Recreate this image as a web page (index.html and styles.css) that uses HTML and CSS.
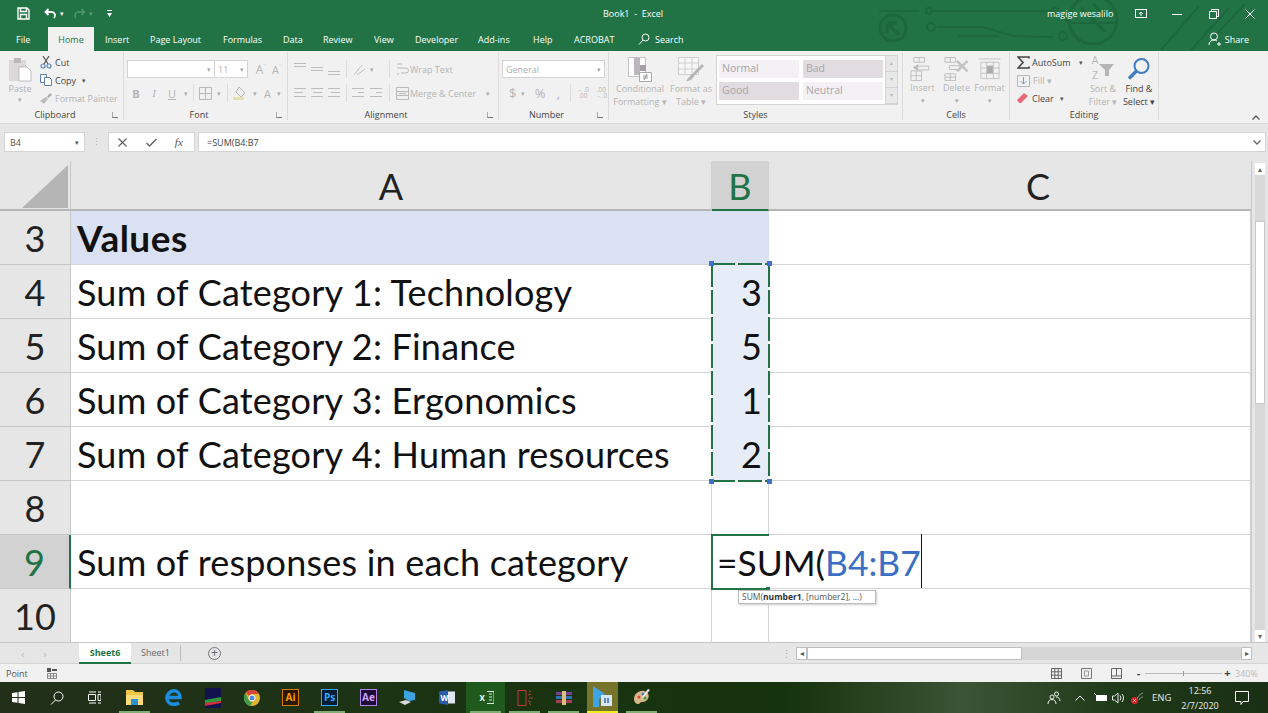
FILE: index.html
```html
<!DOCTYPE html>
<html lang="en">
<head>
	<meta charset="UTF-8">
	<title>Book1 - Excel</title>
	<link rel="stylesheet" href="styles.css">
</head>
<body>
<div id="app">
	<!-- title bar -->
	<div class="titlebar">
		<svg class="circuit" width="400" height="51" viewBox="0 0 400 51" fill="none" stroke="#1d673d" stroke-width="2">
			<circle cx="22" cy="28" r="13" stroke-width="3"/><path d="M16 34V23h10M16 23l12 12" stroke-width="3"/>
			<path d="M8 11h40M60 11h122l18 12h46M66 27h46l30 9 40 1M128 36h-40"/><circle cx="58" cy="11" r="3"/><circle cx="60" cy="27" r="4"/><circle cx="184" cy="11" r="3"/><circle cx="192" cy="36" r="4"/>
			<circle cx="222" cy="20" r="24" stroke-width="3"/><path d="M210 8l24 24M222 4l14 14" stroke-width="3"/>
			<path d="M290 50l38-44M320 50l38-42M342 38l32-34"/>
		</svg>
		<div class="qat">
			<svg width="13" height="13" viewBox="0 0 13 13" fill="none" stroke="#fff" stroke-width="1.4"><path d="M1 1h9l2 2v9H1zM3.500 1v3.500h6V1M3.500 12V7.500h6V12"/></svg>
			<svg class="qat-undo" width="13" height="11" viewBox="0 0 13 11" fill="none" stroke="#fff" stroke-width="1.8"><path d="M4.500 1L1.500 4l3 3M2 4h6a3.500 3.500 0 0 1 2 6"/></svg>
			<span class="qat-caret">▾</span>
			<svg class="qat-redo" width="13" height="11" viewBox="0 0 13 11" fill="none" stroke="#4f9570" stroke-width="1.6"><path d="M8.500 1l3 3-3 3M11 4H5a3.500 3.500 0 0 0-2 6"/></svg>
			<span class="qat-caret dim">▾</span>
			<svg class="qat-more" width="7" height="8" viewBox="0 0 7 8" fill="#fff"><rect x="1" y="0" width="5" height="1"/><path d="M1 3h5L3.500 7z"/></svg>
		</div>
		<div class="doc-title">Book1 &nbsp;-&nbsp; Excel</div>
		<div class="win-controls">
			<span class="user">magige wesalilo</span>
			<svg class="wc wc-display" width="12" height="10" viewBox="0 0 12 10" fill="none" stroke="#fff"><rect x=".5" y=".5" width="11" height="8"/><path d="M6 7V3M4 5l2-2 2 2" /></svg>
			<svg class="wc wc-min" width="10" height="10" viewBox="0 0 10 10" stroke="#fff"><path d="M0 5.500h10"/></svg>
			<svg class="wc wc-max" width="10" height="10" viewBox="0 0 10 10" fill="none" stroke="#fff"><path d="M.5 2.500h7v7h-7zM2.500 2.500v-2h7v7h-2"/></svg>
			<svg class="wc wc-close" width="10" height="10" viewBox="0 0 10 10" stroke="#fff"><path d="M.5.500l9 9M9.500.500l-9 9"/></svg>
		</div>
	</div>

	<!-- tabs -->
	<div class="tabs">
		<span class="tab t-file">File</span>
		<span class="tab active t-home">Home</span>
		<span class="tab t-insert">Insert</span>
		<span class="tab t-layout">Page Layout</span>
		<span class="tab t-formulas">Formulas</span>
		<span class="tab t-data">Data</span>
		<span class="tab t-review">Review</span>
		<span class="tab t-view">View</span>
		<span class="tab t-dev">Developer</span>
		<span class="tab t-addins">Add-ins</span>
		<span class="tab t-help">Help</span>
		<span class="tab t-acrobat">ACROBAT</span>
		<span class="tab t-search">
			<svg width="12" height="12" viewBox="0 0 12 12" fill="none" stroke="#fff"><circle cx="7.500" cy="4.500" r="3.500"/><path d="M5 7l-4 4.500"/></svg>
			Search
		</span>
		<span class="share">
			<svg width="14" height="14" viewBox="0 0 14 14" fill="none" stroke="#fff"><circle cx="6" cy="4.500" r="3.500"/><path d="M1 13c0-3 2-5 5-5 1 0 2 .3 3 1M9 12h4M11 10v4"/></svg>
			Share
		</span>
	</div>

	<!-- ribbon -->
	<div class="ribbon">
		<div class="rgroup g-clip">
			<div class="rbody">
				<div class="paste">
					<svg width="24" height="25" viewBox="0 0 24 25"><rect x="1" y="3" width="17" height="21" fill="#dcd8d8"/><rect x="6" y="1" width="7" height="5" fill="#bdb8b8"/><path d="M11 10h8l4 4v10H11z" fill="#fff" stroke="#bdbdbd"/></svg>
					<span>Paste</span>
					<i class="caret">▾</i>
				</div>
				<div class="clip-list">
					<div class="clip-row on">
						<svg width="12" height="13" viewBox="0 0 12 13" fill="none" stroke="#5b86b8" stroke-width="1.200"><circle cx="3" cy="10" r="2"/><circle cx="9" cy="10" r="2"/><path d="M4 8l5-8M8 8L3 0" stroke="#555"/></svg>
						Cut
					</div>
					<div class="clip-row on">
						<svg width="12" height="12" viewBox="0 0 12 12" fill="#fff" stroke="#5b7fa8"><path d="M.5.500h6v8h-6z"/><path d="M4.500 3.500h5l2 2v6h-7z"/></svg>
						Copy <i class="caret dark">▾</i>
					</div>
					<div class="clip-row off">
						<svg width="12" height="12" viewBox="0 0 12 12"><path d="M0 9l6-4 2 2-4 5z" fill="#bdbdbd"/><path d="M7 5l3-4 2 2-4 3z" fill="#a9a9a9"/></svg>
						Format Painter
					</div>
				</div>
			</div>
			<div class="rlabel">Clipboard<b class="launch"></b></div>
		</div>

		<div class="rgroup g-font">
			<div class="rbody col">
				<div class="frow">
					<span class="input fname"><i class="caret">▾</i></span>
					<span class="input fsize">11<i class="caret">▾</i></span>
					<span class="gly grow-a">A<sup>˄</sup></span>
					<span class="gly shrink-a">A<sup>˅</sup></span>
				</div>
				<div class="frow second">
					<b class="gly w17">B</b>
					<i class="gly w17 serif">I</i>
					<u class="gly w17">U</u>
					<i class="caret w10">▾</i>
					<span class="vsep tight"></span>
					<svg class="ml5" width="13" height="13" viewBox="0 0 13 13" fill="none" stroke="#b9b9b9"><path d="M.5.500h12v12H.5zM6.500.500v12M.5 6.500h12"/></svg>
					<i class="caret w14">▾</i>
					<span class="vsep tight"></span>
					<svg class="ml5" width="15" height="14" viewBox="0 0 15 14"><path d="M6 1l6 6-4 4-5-5z" fill="none" stroke="#b9b9b9"/><rect x="0" y="11" width="11" height="3" fill="#e8dfae"/></svg>
					<i class="caret w14">▾</i>
					<span class="gly w14">A</span>
					<i class="caret w10">▾</i>
				</div>
			</div>
			<div class="rlabel">Font<b class="launch"></b></div>
		</div>

		<div class="rgroup g-align">
			<div class="rbody col">
				<div class="frow al-row">
					<span class="lines top"></span><span class="lines mid"></span><span class="lines bot"></span>
					<span class="vsep"></span>
					<svg class="ml6" width="14" height="13" viewBox="0 0 14 13" fill="none" stroke="#bdbdbd"><path d="M1 12L9 2M4 12l8-6"/></svg>
					<i class="caret w10">▾</i>
					<span class="vsep gap12"></span>
					<span class="wrap off-t">
						<svg width="13" height="14" viewBox="0 0 13 14" fill="none" stroke="#b9b9b9"><path d="M1 2h5M1 6h9a2 2 0 0 1 0 5H5M1 12h2"/></svg>
						Wrap Text
					</span>
				</div>
				<div class="frow second al-row">
					<span class="lines fl"></span><span class="lines fc"></span><span class="lines fr"></span>
					<span class="vsep"></span>
					<span class="lines indent ml5"></span><span class="lines indent"></span>
					<span class="vsep"></span>
					<span class="wrap off-t">
						<svg width="13" height="13" viewBox="0 0 13 13" fill="none" stroke="#b9b9b9"><path d="M.5.500h12v12H.5zM.5 4.500h12M.5 8.500h12M3 6.500h7"/></svg>
						Merge &amp; Center <i class="caret w10">▾</i>
					</span>
				</div>
			</div>
			<div class="rlabel">Alignment<b class="launch"></b></div>
		</div>

		<div class="rgroup g-num">
			<div class="rbody col">
				<div class="frow">
					<span class="input nfmt">General<i class="caret">▾</i></span>
				</div>
				<div class="frow second num-row">
					<span class="gly big">$</span><i class="caret w14">▾</i>
					<span class="gly big pct">%</span><span class="gly big comma">,</span>
					<span class="vsep"></span>
					<span class="dec">←.0<br>.00</span><span class="dec">.00<br>→.0</span>
				</div>
			</div>
			<div class="rlabel">Number<b class="launch"></b></div>
		</div>

		<div class="rgroup g-styles">
			<div class="rbody">
				<div class="bigbtn w48">
					<svg width="24" height="25" viewBox="0 0 24 25"><path d="M.5.500h17v19H.5z" fill="#fff" stroke="#c3c3c3"/><rect x="6" y="1" width="6" height="17" fill="#bcb6bc"/><rect x="12" y="8" width="6" height="6" fill="#a6a0a6"/><path d="M11.500 15.500h12v9h-12z" fill="#fff" stroke="#a9a9a9"/><path d="M15 19h5M15 21h5M19 17l-3 6" stroke="#999" fill="none"/></svg>
					<span>Conditional<br>Formatting ▾</span>
				</div>
				<div class="bigbtn w50">
					<svg width="26" height="25" viewBox="0 0 26 25"><path d="M.5.500h20v17H.5zM.5 6h20M.5 12h20M7 .500v17M14 .500v17" fill="#f7f7f7" stroke="#cfcfcf"/><path d="M24 7L12 19l-4 5c4 0 7-2 8-5L26 9z" fill="#b5b5b5"/></svg>
					<span>Format as<br>Table ▾</span>
				</div>
				<div class="gallery">
					<div class="swatches">
						<span class="sw light">Normal</span>
						<span class="sw">Bad</span>
						<span class="sw">Good</span>
						<span class="sw light">Neutral</span>
					</div>
					<div class="gal-scroll"><i>▴</i><i>▾</i><i>▾</i></div>
				</div>
			</div>
			<div class="rlabel">Styles</div>
		</div>

		<div class="rgroup g-cells">
			<div class="rbody">
				<div class="bigbtn w34">
					<svg width="25" height="25" viewBox="0 0 25 25" fill="none" stroke="#bdbdbd"><path d="M3.500.500h11v5h-11zM9 .500v5M.5 14.500h11v10H.5zM.5 19.500h11M6 14.500v10M7 9.500h12v4H7z"/><path d="M8 8L3 11l5 3" fill="#bdbdbd"/></svg>
					<span>Insert</span><i class="caret">▾</i>
				</div>
				<div class="bigbtn w33">
					<svg width="25" height="25" viewBox="0 0 25 25" fill="none" stroke="#bdbdbd"><path d="M.5.500h11v5H.5zM6 .500v5M.5 17.500h11v7H.5zM6 17.500v7M.5 21h11M5 9h11v4H5z"/><path d="M13 4l11 11M24 4L13 15" stroke-width="2.400" stroke="#c3c3c3"/></svg>
					<span>Delete</span><i class="caret">▾</i>
				</div>
				<div class="bigbtn w33">
					<svg width="25" height="25" viewBox="0 0 25 25" fill="none" stroke="#c3c3c3"><path d="M3.500 5.500h19v17h-19zM9.500 5.500v17M16.500 5.500v17M3.500 11.500h19M3.500 17h19M1 2h23"/><rect x="10" y="9" width="6" height="8" fill="#aaa" stroke="none"/></svg>
					<span>Format</span><i class="caret">▾</i>
				</div>
			</div>
			<div class="rlabel">Cells</div>
		</div>

		<div class="rgroup g-edit">
			<div class="rbody">
				<div class="edit-list">
					<div class="clip-row on sum">
						<svg width="13" height="13" viewBox="0 0 13 13" fill="none" stroke="#444" stroke-width="1.600"><path d="M12 2.500V1H1l5 5.500L1 12h11v-1.500"/></svg>
						AutoSum <i class="caret dark sumcaret">▾</i>
					</div>
					<div class="clip-row off">
						<svg width="13" height="14" viewBox="0 0 13 14" fill="none" stroke="#b5b5b5"><path d="M.5 2.500h12v11H.5z"/><path d="M6.500 4v7M3.500 8l3 3 3-3" stroke="#7f9fbf"/></svg>
						Fill ▾
					</div>
					<div class="clip-row on">
						<svg width="12" height="12" viewBox="0 0 12 12"><path d="M0 8l7-7 4 3-7 7H2z" fill="#ea6b78"/></svg>
						Clear <i class="caret dark">▾</i>
					</div>
				</div>
				<div class="bigbtn w36 sortbtn">
					<div class="sort-ico">
						<div class="az"><span>A</span><span>Z</span></div>
						<svg width="15" height="14" viewBox="0 0 15 14"><path d="M0 1h15L10 7v6H6V7z" fill="#b5b5b5"/></svg>
					</div>
					<span>Sort &amp;<br>Filter ▾</span>
				</div>
				<div class="bigbtn w36 findbtn">
					<svg width="24" height="24" viewBox="0 0 24 24" fill="none" stroke="#3f7cc0" stroke-width="2"><circle cx="14.500" cy="8.500" r="7"/><path d="M9.500 13.500L2 21" stroke-width="3.400"/></svg>
					<span>Find &amp;<br>Select ▾</span>
				</div>
			</div>
			<div class="rlabel">Editing</div>
		</div>
		<svg class="collapse" width="8" height="5" viewBox="0 0 8 5" fill="none" stroke="#555" stroke-width="1.300"><path d="M.5 4.500L4 1l3.500 3.500"/></svg>
	</div>

	<!-- formula bar -->
	<div class="fbar">
		<div class="namebox">B4<i class="caret dark">▾</i></div>
		<div class="fdots">⋮</div>
		<div class="fbtns">
			<svg width="9" height="9" viewBox="0 0 9 9" stroke="#666" stroke-width="1.200"><path d="M.5.500l8 8M8.500.500l-8 8"/></svg>
			<svg width="11" height="9" viewBox="0 0 11 9" fill="none" stroke="#666" stroke-width="1.500"><path d="M.5 5l3 3 7-7"/></svg>
			<span class="fx">fx</span>
		</div>
		<div class="finput">=SUM(B4:B7<svg class="fexpand" width="8" height="5" viewBox="0 0 8 5" fill="none" stroke="#666" stroke-width="1.300"><path d="M.5.500L4 4 7.500.500"/></svg></div>
	</div>

	<!-- sheet -->
	<div class="sheet">
		<div class="corner"><span></span></div>
		<div class="chead">A</div>
		<div class="chead sel">B</div>
		<div class="chead col-c">C</div>
		<div class="vscroll">
			<span class="sb-btn">▴</span>
			<span class="sb-gap"></span>
			<span class="sb-thumb"></span>
			<span class="sb-fill"></span>
			<span class="sb-btn">▾</span>
		</div>

		<div class="rhead">3</div><div class="cell blue bold">Values</div><div class="cell blue"></div><div class="cell"></div>
		<div class="rhead">4</div><div class="cell">Sum of Category 1: Technology</div><div class="cell num pale">3</div><div class="cell"></div>
		<div class="rhead">5</div><div class="cell">Sum of Category 2: Finance</div><div class="cell num pale">5</div><div class="cell"></div>
		<div class="rhead">6</div><div class="cell">Sum of Category 3: Ergonomics</div><div class="cell num pale">1</div><div class="cell"></div>
		<div class="rhead">7</div><div class="cell">Sum of Category 4: Human resources</div><div class="cell num pale">2</div><div class="cell"></div>
		<div class="rhead">8</div><div class="cell"></div><div class="cell"></div><div class="cell"></div>
		<div class="rhead sel">9</div><div class="cell">Sum of responses in each category</div><div class="cell no-edge"></div><div class="cell"></div>
		<div class="rhead last">10</div><div class="cell last"></div><div class="cell last"></div><div class="cell last"></div>

		<div class="ants"><b class="h1"></b><b class="h2"></b><b class="h3"></b><b class="h4"></b></div>
		<div class="active-cell">=SUM(<span class="ref">B4:B7<span class="cursor"></span></span><b class="fill-handle"></b></div>
		<div class="tip">SUM(<b>number1</b>, [number2], ...)</div>
	</div>

	<!-- sheet tabs -->
	<div class="sheetbar">
		<span class="nav">‹</span><span class="nav">›</span>
		<span class="stab on">Sheet6</span>
		<span class="stab">Sheet1</span>
		<span class="addsheet">+</span>
		<span class="hdots">⋮</span>
		<div class="hscroll">
			<span class="hbtn">◂</span>
			<span class="hthumb"></span>
			<span class="htrack"></span>
			<span class="hbtn">▸</span>
		</div>
	</div>

	<!-- status bar -->
	<div class="status">
		<span class="st-mode">Point</span>
		<svg class="st-macro" width="10" height="11" viewBox="0 0 10 11"><rect x="0" y="0" width="4" height="4" fill="#555"/><rect x="5" y="1" width="5" height="2" fill="#555"/><path d="M.5 5.500h9v5h-9zM3.500 5.500v5M6.500 5.500v5M.5 8h9" fill="none" stroke="#888"/></svg>
		<div class="views">
			<svg width="11" height="11" viewBox="0 0 11 11" fill="none" stroke="#666"><path d="M.5.500h10v10H.5zM3.800.500v10M7.200.500v10M.5 3.800h10M.5 7.200h10"/></svg>
			<svg width="11" height="11" viewBox="0 0 11 11" fill="none" stroke="#777"><path d="M.5.500h10v10H.5z"/><path d="M3.500 3h4v5h-4z" stroke="#999"/></svg>
			<svg width="11" height="11" viewBox="0 0 11 11" fill="none" stroke="#666"><path d="M.5.500h10v10H.5zM.5 8h10M5.500.500V8"/></svg>
		</div>
		<div class="zoom">
			<span class="zbtn">-</span>
			<span class="zline"><i></i></span>
			<span class="zbtn">+</span>
		</div>
		<span class="zpct">340%</span>
	</div>

	<!-- windows taskbar -->
	<div class="taskbar">
		<svg class="tb-start" width="13" height="13" viewBox="0 0 13 13" fill="#fff"><path d="M0 2l5.500-.8V6H0zM6.500 1L13 0v6H6.500zM0 7h5.500v4.800L0 11zM6.500 7H13v6l-6.500-1z"/></svg>
		<svg class="tb-search" width="14" height="14" viewBox="0 0 14 14" fill="none" stroke="#fff"><circle cx="8.500" cy="5.500" r="4.500"/><path d="M5.500 9L1 13.500"/></svg>
		<svg class="tb-view" width="13" height="13" viewBox="0 0 13 13" fill="none" stroke="#fff"><path d="M.5 3.500h7v6h-7zM1 1h7M1 12h7M10 1h3M10 3.500h3v6h-3zM10 12h3"/></svg>
		<div class="apps">
			<span class="app run"><svg width="17" height="15" viewBox="0 0 17 15"><path d="M0 0h7l2 2h8v13H0z" fill="#f5c644"/><rect x="0" y="5" width="17" height="10" fill="#fbdc7c"/><rect x="5" y="9" width="7" height="6" fill="#2d8fd5"/></svg></span>
			<span class="app"><svg width="17" height="17" viewBox="0 0 17 17" fill="none" stroke="#1c8ee0" stroke-width="3.600"><path d="M2.500 8.500h12.500c0-4-2.800-6.700-6.300-6.700S2 5 2 9c0 4.200 3 6.300 6.700 6.300 2.200 0 4-.6 5.300-1.500"/></svg></span>
			<span class="app"><svg width="16" height="20" viewBox="0 0 16 20"><rect width="16" height="20" fill="#11124e"/><path d="M0 12l16-3v4L0 16z" fill="#2e9a3c"/><path d="M0 15l16-2v2L0 18z" fill="#d62d3c"/></svg></span>
			<span class="app"><svg width="16" height="16" viewBox="0 0 16 16"><circle cx="8" cy="8" r="8" fill="#e2b52f"/><path d="M8 0a8 8 0 0 1 7 4H8a4 4 0 0 0-3.500 2L2 2a8 8 0 0 1 6-2z" fill="#d8443a"/><path d="M1.700 3A8 8 0 0 0 6 15.800L8.500 12A4 4 0 0 1 4.500 10z" fill="#3d9c4b"/><circle cx="8" cy="8" r="3" fill="#4d89e6" stroke="#fff"/></svg></span>
			<span class="app"><span class="adobe ai">Ai</span></span>
			<span class="app run"><span class="adobe ps">Ps</span></span>
			<span class="app"><span class="adobe ae">Ae</span></span>
			<span class="app"><svg width="17" height="15" viewBox="0 0 17 15"><path d="M5 0l11 3v7l-6 1-5-3z" fill="#3ba3e0"/><path d="M0 12l7-2 5 2-6 3z" fill="#d9d9d9"/></svg></span>
			<span class="app"><svg width="16" height="15" viewBox="0 0 16 15"><rect x="7" y="1.500" width="9" height="12" fill="#dfe7f3"/><path d="M0 1.500L9 0v15L0 13.500z" fill="#2b5aa8"/><text x="1.500" y="10.500" class="msl">W</text></svg></span>
			<span class="app on run"><svg width="16" height="15" viewBox="0 0 16 15"><path d="M9 1.500h7v12H9M11 4h3M11 7h3M11 10h3" fill="none" stroke="#d8e8dc"/><text x="1.500" y="10.500" class="msl">X</text></svg></span>
			<span class="app run"><svg width="16" height="18" viewBox="0 0 16 18" fill="none" stroke="#c5393a"><path d="M1 1.500h8v15H1z"/><path d="M12 3l2-1M12 9h4M12 14l2 2M11 6l3-1M11 12l3 1" stroke="#a84c30"/></svg></span>
			<span class="app run"><svg width="16" height="14" viewBox="0 0 16 14"><rect y="1" width="16" height="3" fill="#7c3f8e"/><rect y="5" width="16" height="3" fill="#2f70b6"/><rect y="9" width="16" height="3" fill="#a93b55"/><rect x="6" width="4" height="14" fill="#d8c27a"/></svg></span>
			<span class="app media"><svg width="20" height="21" viewBox="0 0 20 21"><path d="M0 0l12 8-6 5v8H0z" fill="#3fa3e8"/><rect x="8" y="9" width="11" height="11" fill="#d4e6f5"/><path d="M12 12v5M15 12v5" stroke="#3a68b5" stroke-width="1.500"/></svg></span>
			<span class="app run"><svg width="17" height="17" viewBox="0 0 17 17"><path d="M1 10C1 5 6 1 11 2s6 6 3 9-6 1-7 3-6 1-6-4z" fill="#d9b98a"/><circle cx="6" cy="8" r="1.500" fill="#d8443a"/><circle cx="10" cy="5" r="1.500" fill="#3f7cc0"/><circle cx="12" cy="9" r="1.500" fill="#3d9c4b"/><path d="M15 0l2 1-7 8-1-1z" fill="#eee"/></svg></span>
		</div>
		<div class="tray">
			<svg class="tr-people" width="14" height="14" viewBox="0 0 14 14" fill="none" stroke="#fff" stroke-width=".9"><circle cx="9.500" cy="3" r="2"/><circle cx="5" cy="6" r="2"/><path d="M1 13c0-3 1.500-4.500 4-4.500S9 10 9 13M9 6c2.500 0 4 1.500 4 4"/></svg>
			<svg class="tr-up" width="10" height="6" viewBox="0 0 10 6" fill="none" stroke="#fff"><path d="M.5 5.500L5 1l4.500 4.500"/></svg>
			<svg class="tr-bat" width="13" height="9" viewBox="0 0 13 9"><rect x="2" y="2" width="11" height="6" fill="#fff"/><path d="M0 0l3 3" stroke="#fff"/></svg>
			<svg class="tr-vol" width="13" height="12" viewBox="0 0 13 12" fill="none" stroke="#fff" stroke-width=".9"><path d="M.5 4h2L6 1v10L2.500 8h-2zM8 3.500a4 4 0 0 1 0 5M10 2a6 6 0 0 1 0 8"/></svg>
			<svg class="tr-net" width="12" height="12" viewBox="0 0 12 12"><path d="M6 7c1-3 3-5 6-6M8 8c.6-1.500 2-3 4-3" fill="none" stroke="#aaa" stroke-width=".8"/><circle cx="3.500" cy="8.500" r="3.500" fill="#d6242c"/><path d="M2.300 7.300l2.400 2.400M4.700 7.300L2.300 9.700" stroke="#fff" stroke-width=".8"/></svg>
			<span class="tr-lang">ENG</span>
			<span class="tr-clock">12:56<br>2/7/2020</span>
			<svg class="tr-notif" width="14" height="14" viewBox="0 0 14 14" fill="none" stroke="#fff"><path d="M.5.500h13v10H8L6 13.500V10.500H.5z"/></svg>
		</div>
	</div>
</div>
</body>
</html>
```

FILE: styles.css
```css
* { box-sizing:border-box; }
html, body { margin:0;height:100%; }
body { font-family:"Open Sans","Noto Sans",sans-serif;font-size:9px;color:#444;overflow:hidden; }
i, u { font-style:normal; }

#app { width:1268px;height:713px;display:flex;flex-direction:column;position:relative;background:#e6e6e6; }

/* title bar */
.titlebar { height:27px;background:#217346;color:#fff;display:flex;align-items:center;position:relative;z-index:1;flex:none; }
.circuit { position:absolute;left:871px;top:0; }
.qat { display:flex;align-items:center;width:420px;padding-left:17px;flex:none; }
.qat-undo { margin-left:14px; }
.qat-caret { font-size:7px;margin-left:3px; }
.qat-caret.dim { color:#5e9d7c; }
.qat-redo { margin-left:9px; }
.qat-more { margin-left:13px; }
.doc-title { position:relative;width:620px;padding-left:183px;flex:none; }
.win-controls { position:relative;display:flex;align-items:center; }
.user { margin-left:7px;width:88px; }
.wc-min { margin-left:25px; }
.wc-max { margin-left:27px; }
.wc-close { margin-left:26px; }

/* tabs */
.tabs { height:24px;background:#217346;display:flex;color:#fff;position:relative;flex:none; }
.tab { display:flex;align-items:center;gap:5px;height:24px;flex:none; }
.tab.active { background:#f1f1f1;color:#217346;justify-content:center; }
.t-file { margin-left:16px;width:32px; }
.t-home { width:46px; }
.t-insert { margin-left:11px;width:45px; }
.t-layout { width:73px; }
.t-formulas { width:60px; }
.t-data { width:40px; }
.t-review { width:51px; }
.t-view { width:41px; }
.t-dev { width:63px; }
.t-addins { width:55px; }
.t-help { width:41px; }
.t-acrobat { width:64px; }
.t-search { width:60px; }
.share { position:absolute;right:19px;top:0;height:24px;display:flex;align-items:center;gap:3px;z-index:2; }

/* ribbon */
.ribbon { height:73px;background:#f1f1f1;display:flex;position:relative;flex:none;border-bottom:1px solid #dadada; }
.rgroup { display:flex;flex-direction:column;position:relative;margin-top:1px;height:68px;border-right:1px solid #dcdcdc;flex:none; }
.rbody { flex:1;display:flex;min-height:0; }
.rbody.col { flex-direction:column; }
.rlabel { height:14px;text-align:center;line-height:14px;color:#444;margin-bottom:-2px;position:relative; }
.launch { position:absolute;right:5px;top:4px;width:6px;height:6px;border-left:1px solid #aaa;border-bottom:1px solid #777; }
.caret { font-size:7px;color:#aaa;font-style:normal; }
.caret.dark { color:#555; }

.g-clip { width:124px; }
.g-clip .rlabel { padding-right:13px; }
.g-font .rlabel { padding-right:16px; }
.g-align .rlabel { padding-right:20px; }
.g-num .rlabel { padding-right:17px; }
.g-styles .rlabel { padding-right:5px; }
.paste { width:40px;display:flex;flex-direction:column;align-items:center;padding-top:5px;color:#b0b0b0;line-height:13px; }
.paste .caret { line-height:10px; }
.clip-list { padding-top:1px;display:flex;flex-direction:column; }
.clip-row { height:18px;display:flex;align-items:center;gap:3px;white-space:nowrap; }
.clip-row.on { color:#444; }
.clip-row.off { color:#b4b4b4; }
.clip-row svg { flex:none; }
.clip-row .caret { margin-left:3px; }

.g-font { width:164px;padding-left:3px; }
.frow { display:flex;align-items:center;height:18px;margin-top:8px;color:#b0b0b0;flex:none; }
.frow.second { margin-top:6px; }
.input { height:18px;background:#fff;border:1px solid #d4d4d4;display:flex;align-items:center;justify-content:space-between;padding:0 3px;color:#b0b0b0; }
.fname { width:88px;justify-content:flex-end; }
.fsize { width:34px;margin-left:-1px; }
.gly { font-size:11px;color:#b5b5b5;text-align:center; }
.gly sup { font-size:7px;line-height:0; }
.grow-a { margin-left:5px;width:15px;font-size:12px; }
.shrink-a { margin-left:1px;width:15px; }
.w17 { width:18px; }
.w14 { width:13px;text-align:center; }
.w10 { width:10px;text-align:center; }
.serif { font-family:"Liberation Serif",serif;font-style:italic; }
.vsep { width:1px;height:18px;background:#dcdcdc;margin-left:6px;flex:none; }
.vsep.tight { margin-left:2px; }
.vsep.gap12 { margin-left:12px; }
.ml5 { margin-left:5px; }
.ml6 { margin-left:6px; }

.g-align { width:211px;padding-left:6px; }
.lines { width:13px;height:14px;margin-right:4px;flex:none;background-repeat:no-repeat;background-image:linear-gradient(#bdbdbd,#bdbdbd),linear-gradient(#bdbdbd,#bdbdbd),linear-gradient(#bdbdbd,#bdbdbd);background-size:12px 1px,12px 1px,12px 1px; }
.lines.top { background-position:0 1px,0 4px,0 20px; }
.lines.mid { background-position:0 5px,0 8px,0 20px; }
.lines.bot { background-position:0 9px,0 12px,0 20px; }
.lines.fl { background-size:12px 1px,9px 1px,12px 1px;background-position:0 2px,0 6px,0 10px; }
.lines.fc { background-size:12px 1px,9px 1px,12px 1px;background-position:0 2px,2px 6px,0 10px; }
.lines.fr { background-size:12px 1px,9px 1px,12px 1px;background-position:0 2px,3px 6px,0 10px; }
.lines.indent { background-size:12px 1px,6px 1px,12px 1px;background-position:0 2px,6px 6px,0 10px;margin-right:5px; }
.wrap { display:flex;align-items:center;gap:1px;margin-left:6px;color:#b4b4b4;white-space:nowrap; }
.wrap .caret { margin-left:6px; }
.al-row .lines + .vsep { margin-left:1px; }

.g-num { width:110px;padding-left:3px; }
.nfmt { width:103px; }
.num-row { padding-left:7px; }
.gly.big { font-size:13px; }
.pct { margin-left:6px; }
.comma { margin-left:10px;width:6px; }
.num-row .vsep { margin-left:9px; }
.dec { font-size:6.500px;line-height:6.500px;margin-left:5px;width:14px;text-align:center;color:#b5b5b5; }

.g-styles { width:294px;padding-left:5px; }
.bigbtn { display:flex;flex-direction:column;align-items:center;text-align:center;color:#b4b4b4;line-height:13px;padding-top:5px;white-space:nowrap;flex:none; }
.bigbtn > svg { height:25px; }
.bigbtn .caret { line-height:14px; }
.w48 { width:52px; }
.w50 { width:50px; }
.w34 { width:35px;margin-left:2px; }
.w33 { width:33px; }
.w36 { width:36px; }
.gallery { margin-top:3px;width:182px;height:50px;background:#fff;border:1px solid #d4d4d4;display:flex;flex:none; }
.swatches { flex:1;display:grid;grid-template-columns:80px 80px;grid-auto-rows:18px;gap:4px 4px;padding:4px 2px; }
.sw { background:#e0dce0;color:#a8a4a8;font-size:10.500px;line-height:17px;padding-left:3px; }
.sw.light { background:#f4f1f5; }
.gal-scroll { width:12px;border-left:1px solid #d4d4d4;background:#e8e8e8;display:flex;flex-direction:column; }
.gal-scroll i { flex:1;text-align:center;font-size:6px;color:#bbb;line-height:15px;border-bottom:1px solid #d4d4d4; }

.g-cells { width:107px; }
.g-edit { width:149px; }
.edit-list { padding:1px 0 0 7px;width:76px;flex:none; }
.sum { gap:2px; }
.sumcaret { margin-left:6px !important; }
.sortbtn { margin-left:-1px; }
.sort-ico { display:flex;height:25px;align-items:center; }
.az { font-size:10.500px;line-height:14.500px;color:#b9b9b9;margin:-4px 1px 0 0; }
.az span { display:block;height:14.500px; }
.findbtn { color:#444; }
.collapse { position:absolute;left:1252px;top:64px; }

/* formula bar */
.fbar { height:37px;flex:none;display:flex;padding:8px 0 9px 4px;background:#e6e6e6; }
.namebox { width:81px;height:20px;background:#fff;border:1px solid #d4d4d4;display:flex;align-items:center;justify-content:space-between;padding:0 5px;color:#555; }
.fdots { width:23px;text-align:center;line-height:20px;color:#aaa; }
.fbtns { width:87px;height:20px;background:#fff;border:1px solid #d4d4d4;display:flex;align-items:center;justify-content:space-around;padding:0 2px 0 0; }
.fx { font-family:"Liberation Serif",serif;font-style:italic;font-size:11px;color:#555; }
.finput { width:1068px;margin-left:3px;height:20px;background:#fff;border:1px solid #d4d4d4;display:flex;align-items:center;justify-content:space-between;padding:0 4px 0 8px;color:#444; }

/* sheet */
.sheet { height:481px;flex:none;display:grid;grid-template-columns:71px 641px 57px 482px 17px;grid-template-rows:50px repeat(7,54px) 53px;background:#fff;position:relative;font-family:"Lato","Open Sans",sans-serif;color:#111; }
.corner { background:#e6e6e6;border-right:1px solid #c6c6c6;border-bottom:2px solid #b5b5b5;padding:4px 2px 3px 0;display:flex;justify-content:flex-end; }
.corner span { width:46px;height:43px;background:#b5b5b5;clip-path:polygon(100% 0,100% 100%,0 100%); }
.chead { background:#e6e6e6;border-right:1px solid #d0d0d0;border-bottom:2px solid #b5b5b5;font-size:36px;text-align:center;line-height:50px;color:#222; }
.chead.sel { background:#d2d2d2;color:#217346;border-bottom:2px solid #217346; }
.chead.col-c { padding-left:56px;border-right:none; }
.vscroll { grid-column:5;grid-row:1 / 10;background:#e6e6e6;display:flex;flex-direction:column;padding:2px 3px 0;border-left:1px solid #c8c8c8;font-size:8px; }
.sb-btn { height:12px;background:#fff;text-align:center;line-height:11px;color:#666;font-family:"Open Sans",sans-serif; }
.sb-gap { height:46px;background:#d8d8d8; }
.sb-thumb { height:183px;background:#fff;border:1px solid #c8c8c8; }
.sb-fill { flex:1;background:#d8d8d8; }
.rhead { background:#e6e6e6;border-right:1px solid #c6c6c6;border-bottom:1px solid #c6c6c6;font-size:36px;text-align:center;line-height:55px;color:#222; }
.rhead.sel { background:#d2d2d2;color:#217346;border-right:2px solid #217346; }
.rhead.last { border-bottom:none;line-height:54px; }
.cell { border-right:1px solid #d4d4d4;border-bottom:1px solid #d4d4d4;font-size:36px;letter-spacing:.2px;line-height:54px;padding-left:6px;white-space:nowrap;overflow:hidden; }
.cell.last { border-bottom:none; }
.cell.no-edge { border-right-color:#fff; }
.cell.blue { background:#d9e1f2;border-right-color:#d9e1f2; }
.cell.bold { font-weight:700;font-size:37px;letter-spacing:.5px; }
.cell.pale { background:#e6edf8;border-color:#e6edf8; }
.cell.num { text-align:right;padding-right:6px;padding-left:0;letter-spacing:0; }

.ants { position:absolute;grid-column:3 / 4;grid-row:3 / 7;left:-1px;top:-2px;right:-1px;bottom:-1px;background:repeating-linear-gradient(90deg,#217346 0 24px,#fff 24px 27px) top/100% 2px no-repeat,repeating-linear-gradient(90deg,#217346 0 24px,#fff 24px 27px) bottom/100% 2px no-repeat,repeating-linear-gradient(#217346 0 24px,#fff 24px 27px) left/2px 100% no-repeat,repeating-linear-gradient(#217346 0 24px,#fff 24px 27px) right/2px 100% no-repeat; }
.ants b { position:absolute;width:5px;height:5px;background:#3f6fd0; }
.h1 { left:-2px;top:-2px; }
.h2 { right:-2px;top:-2px; }
.h3 { left:-2px;bottom:-2px; }
.h4 { right:-2px;bottom:-2px; }
.active-cell { position:absolute;grid-column:3 / 4;grid-row:8 / 9;left:-1px;top:-1px;bottom:-1px;right:0;padding-left:4px;font-size:35.400px;line-height:53px;border:2px solid #217346;border-right:none;white-space:nowrap; }
.ref { color:#3a6fc4;position:relative; }
.cursor { position:absolute;right:-1px;top:-7px;height:54px;width:1px;background:#111; }
.fill-handle { position:absolute;right:-1px;bottom:-3px;width:4px;height:4px;background:#217346; }
.tip { position:absolute;grid-column:3 / 4;grid-row:8 / 9;left:26px;top:55px;width:138px;height:14px;background:#fff;border:1px solid #bdbdbd;box-shadow:1px 1px 2px #ccc;font:8.500px/12px "Open Sans",sans-serif;color:#555;padding-left:3px;white-space:nowrap;z-index:2; }
.tip b { color:#333; }

/* sheet tabs */
.sheetbar { height:22px;flex:none;display:flex;align-items:center;background:#e6e6e6;border-top:1px solid #c8c8c8;border-bottom:1px solid #d4d4d4;position:relative; }
.nav { width:22px;text-align:center;color:#bbb;font-size:11px; }
.nav:first-child { margin-left:12px; }
.stab { width:50px;height:16px;text-align:center;line-height:15px;color:#666;border-right:1px solid #bbb; }
.stab.on { margin-left:23px;width:52px;background:#fff;color:#217346;font-weight:700;border:none;border-bottom:2px solid #217346;height:21px;line-height:19px; }
.addsheet { width:13px;height:13px;border:1px solid #777;border-radius:50%;margin-left:27px;text-align:center;line-height:10px;font-size:12px;color:#666;flex:none; }
.hdots { margin-left:560px;color:#aaa;font-size:11px;width:6px; }
.hscroll { margin-left:9px;width:456px;height:13px;display:flex;background:#d6d6d6; }
.hbtn { width:11px;background:#fff;border:1px solid #c0c0c0;font-size:8px;text-align:center;line-height:10px;color:#555; }
.hthumb { width:215px;background:#fff;border:1px solid #c0c0c0; }
.htrack { flex:1; }

/* status bar */
.status { height:18px;flex:none;display:flex;align-items:center;background:#f1f1f1;color:#555;position:relative; }
.st-mode { margin-left:6px;width:41px; }
.views { margin-left:994px;display:flex;gap:19px; }
.zoom { display:flex;align-items:center;margin-left:13px; }
.zbtn { width:7px;text-align:center;font-size:11px;line-height:10px;color:#444;font-weight:700; }
.zline { width:77px;height:1px;background:#bbb;position:relative;margin:0 2px 0 3px; }
.zline i { position:absolute;left:38px;top:-2px;width:1px;height:5px;background:#999; }
.zpct { margin-left:4px;color:#bbb; }

/* taskbar */
.taskbar { height:31px;flex:none;display:flex;align-items:center;position:relative;color:#fff;background:linear-gradient(90deg,#22301a 0,#1c3314 30%,#15330c 62%,#3b5435 76%,#1f3a18 88%,#1a2f14 100%); }
.tb-start { margin-left:12px; }
.tb-search { margin-left:25px; }
.tb-view { margin-left:24px; }
.apps { display:flex;margin-left:14px;height:31px; }
.app { width:39px;height:31px;display:flex;align-items:center;justify-content:center;background-repeat:no-repeat; }
.app.run { background-image:linear-gradient(#7fae76,#7fae76);background-size:31px 2px;background-position:center bottom; }
.app.on { background-color:#1f5a1c; }
.app.media { width:31px;margin:0 4px;background:#76732a;border-bottom:2px solid #f2ee1e; }
.adobe { width:17px;height:17px;font:700 10px/15px "Open Sans",sans-serif;text-align:center;border:1px solid; }
.ai { color:#ff9a00;border-color:#d47a00;background:#2a1800; }
.ps { color:#31a8ff;border-color:#31a8ff;background:#041e36; }
.ae { color:#cfa2ff;border-color:#b184e8;background:#1d0a38; }
.msl { font:700 8px "Open Sans",sans-serif;fill:#fff; }
.tray { margin-left:386px;display:flex;align-items:center;height:31px; }
.tr-up { margin-left:14px; }
.tr-bat { margin-left:9px; }
.tr-vol { margin-left:5px; }
.tr-net { margin-left:6px; }
.tr-lang { margin-left:9px;font-size:9.500px;color:#e8e8e8;width:27px; }
.tr-clock { width:42px;text-align:center;line-height:15px;color:#eee; }
.tr-notif { margin-left:14px; }
```
